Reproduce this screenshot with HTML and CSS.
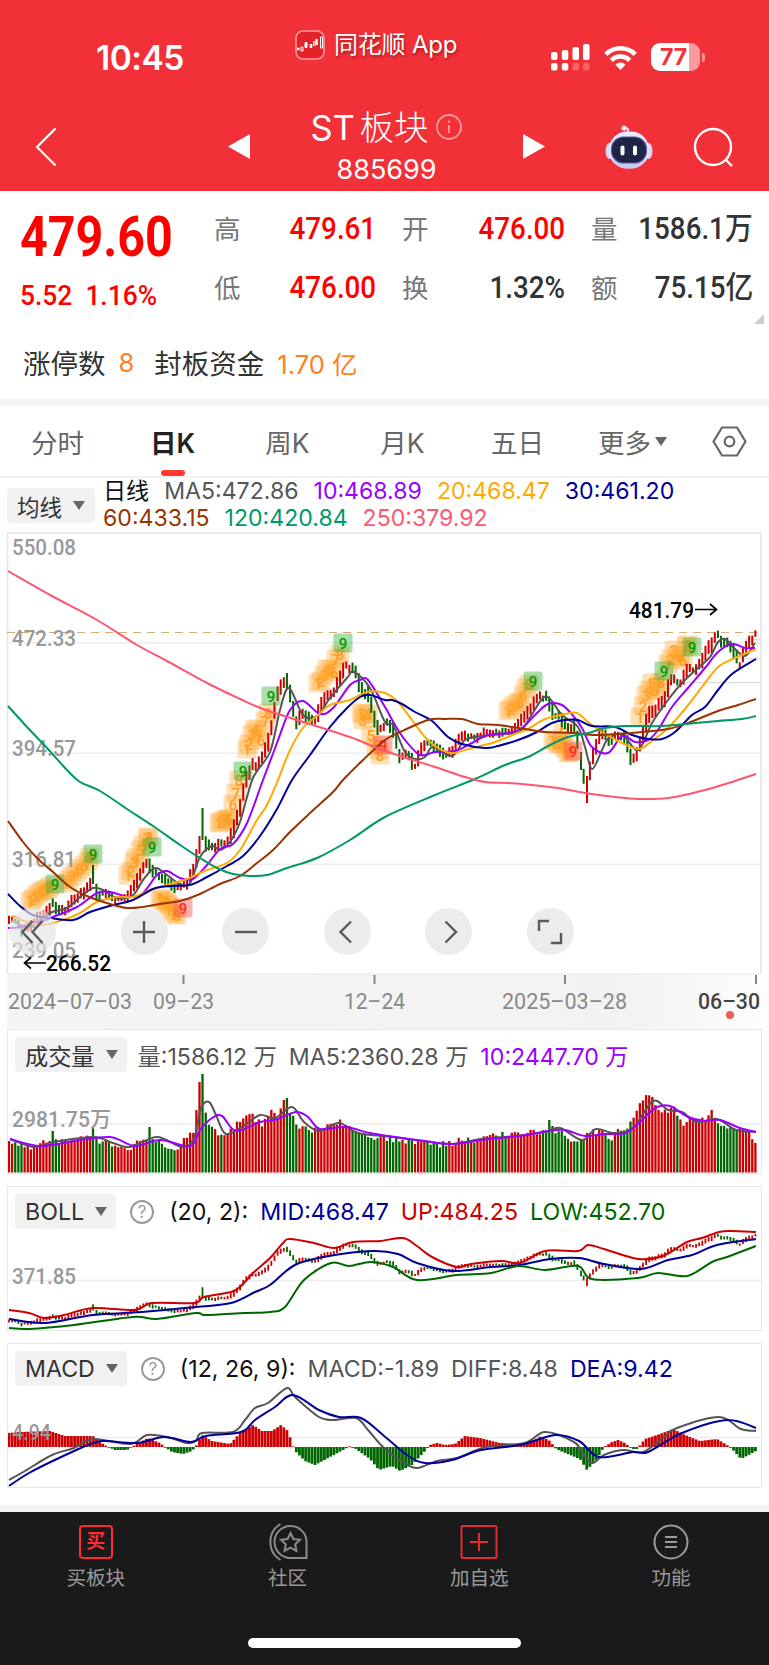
FILE: index.html
```html
<!DOCTYPE html>
<html lang="zh-CN">
<head>
    <meta charset="UTF-8">
    <meta name="viewport" content="width=device-width, initial-scale=1.0">
    <title>ST板块 885699</title>
    <link rel="stylesheet" href="styles.css">
</head>
<body>
    <header class="header">
        <div class="status-bar">
            <div class="status-time">10:45</div>
            <div class="app-name">
                <svg width="30" height="30" viewBox="0 0 30 30">
                    <rect x="1" y="1" width="28" height="28" rx="7" fill="#e32229" stroke="#ff9a9c" stroke-width="1.6"/>
                    <path d="M2 19h2.500M11 12v6M16 14v4M21.500 9v6" stroke="#fff" stroke-width="2.400"/>
                    <path d="M6 17h2v4H6zM10 13.500h2v3h-2zM18.500 11.500h1.600v4h-1.600zM25.500 7h2v11h-2z" fill="none" stroke="#fff" stroke-width="1"/>
                </svg>
                <span>同花顺 App</span>
            </div>
            <div class="status-icons">
                <svg width="39" height="28" viewBox="0 0 39 28" fill="#fff">
                    <rect x="0" y="9" width="6.500" height="8" rx="2"/>
                    <rect x="10.800" y="7" width="6.500" height="10" rx="2"/>
                    <rect x="21.500" y="4" width="6.500" height="13" rx="2"/>
                    <rect x="32" y="1" width="6.500" height="16" rx="2"/>
                    <rect x="0" y="20" width="6.500" height="7.500" rx="2"/>
                    <rect x="10.800" y="20" width="6.500" height="7.500" rx="2"/>
                    <rect x="21.500" y="20" width="6.500" height="7.500" rx="2" opacity=".25"/>
                    <rect x="32" y="20" width="6.500" height="7.500" rx="2" opacity=".25"/>
                </svg>
                <svg class="wifi" width="33" height="26" viewBox="0 0 33 26" fill="none" stroke="#fff" stroke-width="4.600">
                    <path d="M1.800 9.300a21 21 0 0 1 29.400 0M7.300 15.300a13 13 0 0 1 18.400 0"/>
                    <path d="M16.500 25l-5-5.300a7 7 0 0 1 10 0z" fill="#fff" stroke="none"/>
                </svg>
                <div class="battery"><span>77</span></div>
                <i class="battery-cap"></i>
            </div>
        </div>
        <div class="nav-bar">
            <svg class="nav-back" width="22" height="40" viewBox="0 0 22 40"><path d="M20.500 1.500L2 20l18.500 18.500" fill="none" stroke="#fff" stroke-width="2.200"/></svg>
            <svg class="nav-prev" width="22" height="25" viewBox="0 0 22 25"><path d="M22 0v25L0 12.500z" fill="#fff"/></svg>
            <div class="nav-title">
                <div class="nav-name"><span>ST <span>板块</span></span>
                    <svg width="28" height="28" viewBox="0 0 28 28" fill="none" stroke="#ff9c9f" stroke-width="1.800">
                        <circle cx="14" cy="14" r="12"/><path d="M14 12v8M14 7.500v2.300"/>
                    </svg>
                </div>
                <div class="nav-code">885699</div>
            </div>
            <svg class="nav-next" width="22" height="25" viewBox="0 0 22 25"><path d="M0 0v25l22-12.500z" fill="#fff"/></svg>
            <svg class="nav-robot" width="48" height="44" viewBox="0 0 48 44">
                <path d="M23 8V4.500q-2-2.500-4-1.500" fill="none" stroke="#dfe3ff" stroke-width="2.200"/>
                <circle cx="19" cy="3" r="2.600" fill="#f4e4f2"/>
                <ellipse cx="4.500" cy="26" rx="4" ry="8" fill="#d3d6f8"/>
                <ellipse cx="43.500" cy="26" rx="4" ry="8" fill="#d3d6f8"/>
                <rect x="4" y="6.500" width="40" height="37" rx="18" fill="#e8eafd"/>
                <path d="M7 34q17 9 34 0-5 9.500-17 9.500T7 34z" fill="#c6caf0"/>
                <rect x="6.500" y="12" width="35" height="26" rx="12" fill="#1d2446" stroke="#5b55a8" stroke-width="1.200"/>
                <rect x="15.500" y="20.500" width="4" height="10" rx="2" fill="#fff"/>
                <rect x="28" y="20.500" width="4" height="10" rx="2" fill="#fff"/>
            </svg>
            <svg class="nav-search" width="42" height="42" viewBox="0 0 42 42" fill="none" stroke="#fff" stroke-width="2.400">
                <circle cx="20" cy="20" r="18"/><path d="M32 32l7 7"/>
            </svg>
        </div>
    </header>

    <section class="quote">
        <div class="quote-grid">
            <div class="quote-price"><span class="din">479.60</span></div>
            <div class="quote-item"><label>高</label><b class="din up">479.61</b></div>
            <div class="quote-item"><label>开</label><b class="din up">476.00</b></div>
            <div class="quote-item"><label>量</label><b class="din">1586.1万</b></div>
            <div class="quote-change"><span class="din">5.52&nbsp; 1.16%</span></div>
            <div class="quote-item"><label>低</label><b class="din up">476.00</b></div>
            <div class="quote-item"><label>换</label><b class="din">1.32%</b></div>
            <div class="quote-item"><label>额</label><b class="din">75.15亿</b></div>
        </div>
        <i class="quote-corner"></i>
        <div class="quote-extra">
            <span>涨停数</span><em>8</em><span class="second">封板资金</span><em>1.70 亿</em>
        </div>
    </section>

    <nav class="tabs">
        <div class="tab">分时</div>
        <div class="tab active">日K</div>
        <div class="tab">周K</div>
        <div class="tab">月K</div>
        <div class="tab">五日</div>
        <div class="tab">更多<i class="caret"></i></div>
        <div class="tab">
            <svg width="35" height="31" viewBox="0 0 35 31" fill="none" stroke="#666" stroke-width="2.200">
                <path d="M10 1.500h15l8.500 14-8.500 14H10L1.500 15.500z" stroke-linejoin="round"/><circle cx="17.500" cy="15.500" r="4.800"/>
            </svg>
        </div>
    </nav>

    <section class="ma-legend">
        <div class="chip chip-ma">均线<i class="caret"></i></div>
        <div class="ma-values">
            <div><span class="c-black">日线</span><span class="c-gray">MA5:472.86</span><span class="c-purple">10:468.89</span><span class="c-yellow">20:468.47</span><span class="c-blue">30:461.20</span></div>
            <div><span class="c-brown">60:433.15</span><span class="c-teal">120:420.84</span><span class="c-pink">250:379.92</span></div>
        </div>
    </section>

    <section class="kline">
        <svg id="kline" width="769" height="443" viewBox="0 532 769 443"></svg>
        <div class="tools">
            <button class="tool faded"><svg viewBox="0 0 24 24"><path d="M11.500 1L1.500 12l10 11M21.500 1l-10 11 10 11"/></svg></button>
            <button class="tool"><svg viewBox="0 0 24 24"><path d="M12 1v22M1 12h22"/></svg></button>
            <button class="tool"><svg viewBox="0 0 24 24"><path d="M1 12h22"/></svg></button>
            <button class="tool"><svg viewBox="0 0 24 24"><path d="M16 1.500L5.500 12 16 22.500"/></svg></button>
            <button class="tool"><svg viewBox="0 0 24 24"><path d="M8.500 1.500L19 12 8.500 22.500"/></svg></button>
            <button class="tool"><svg viewBox="0 0 24 24"><path d="M1 11V1h10M23 13v10H13"/></svg></button>
        </div>
        <svg id="dates" class="dates" width="769" height="54" viewBox="0 975 769 54"></svg>
    </section>

    <section class="panel panel-vol">
        <div class="panel-head">
            <div class="chip">成交量<i class="caret"></i></div>
            <span class="c-gray first">量:1586.12 万</span><span class="c-gray">MA5:2360.28 万</span><span class="c-purple">10:2447.70 万</span>
        </div>
        <svg id="volume" width="753" height="102" viewBox="8 1072 753 102"></svg>
    </section>

    <section class="panel panel-boll">
        <div class="panel-head">
            <div class="chip">BOLL<i class="caret"></i></div>
            <i class="help">?</i>
            <span class="c-black">(20, 2):</span><span class="c-blue">MID:468.47</span><span class="c-red">UP:484.25</span><span class="c-green">LOW:452.70</span>
        </div>
        <svg id="boll" width="753" height="102" viewBox="8 1229 753 102"></svg>
    </section>

    <section class="panel panel-macd">
        <div class="panel-head">
            <div class="chip">MACD<i class="caret"></i></div>
            <i class="help">?</i>
            <span class="c-black">(12, 26, 9):</span><span class="c-gray">MACD:-1.89</span><span class="c-gray">DIFF:8.48</span><span class="c-blue">DEA:9.42</span>
        </div>
        <svg id="macd" width="753" height="101" viewBox="8 1386 753 101"></svg>
    </section>

    <footer class="bottom">
        <div class="bottom-items">
            <div class="bottom-item">
                <span class="buy-icon">买</span>
                <span>买板块</span>
            </div>
            <div class="bottom-item">
                <svg width="42" height="38" viewBox="0 0 42 38" fill="none" stroke="#8b8b8b" stroke-width="2">
                    <path d="M13.500 1a21 21 0 0 0 0 36"/>
                    <path d="M39.500 35H24A16 16 0 1 1 39.500 19z"/>
                    <path d="M23.500 10l2.900 6 6.600.8-4.800 4.600 1.200 6.500-5.900-3.200-5.900 3.200 1.200-6.500-4.800-4.600 6.600-.8z"/>
                </svg>
                <span>社区</span>
            </div>
            <div class="bottom-item">
                <svg width="38" height="38" viewBox="0 0 38 38" fill="none" stroke="#e52b30" stroke-width="2">
                    <rect x="1.500" y="3" width="35" height="32" rx="1"/><path d="M19 10v18M10 19h18"/>
                </svg>
                <span>加自选</span>
            </div>
            <div class="bottom-item">
                <svg width="38" height="38" viewBox="0 0 38 38" fill="none" stroke="#9a9a9a" stroke-width="2">
                    <circle cx="19" cy="19" r="16.500"/><path d="M13 14h12M13 19h12M13 24h12"/>
                </svg>
                <span>功能</span>
            </div>
        </div>
        <div class="home-bar"></div>
    </footer>
    <script src="chart.js"></script>
</body>
</html>
```
FILE: styles.css
```css
* {
    box-sizing: border-box;
}
body {
    margin: 0;
    width: 769px;
    background: #fff;
    color: #333;
    font-family: Inter, "Noto Sans CJK SC", sans-serif;
}
svg {
    display: block;
    flex: none;
}
.din {
    display: inline-block;
    font-family: Roboto, "Noto Sans CJK SC", sans-serif;
    font-weight: 500;
    transform: scaleX(0.91);
    transform-origin: right center;
    white-space: nowrap;
}

/* Header */
.header {
    height: 191px;
    background: #f23037;
    color: #fff;
}
.status-bar {
    display: flex;
    height: 104px;
    padding-top: 28px;
}
.status-time {
    width: 295px;
    padding: 9px 0 0 96px;
    font-size: 33.5px;
    line-height: 42px;
    font-weight: 600;
    letter-spacing: -0.5px;
}
.app-name {
    display: flex;
    align-items: center;
    gap: 9px;
    width: 256px;
    height: 33px;
    font-size: 24px;
    letter-spacing: -0.2px;
    text-shadow: 1px 2px 3px rgba(90,0,0,0.5);
}
.app-name span {
    margin-top: -4px;
}
.status-icons {
    display: flex;
    padding-top: 15px;
}
.wifi {
    margin: 2px 14px 0 14px;
}
.battery {
    width: 49px;
    height: 28px;
    border-radius: 9px;
    background: linear-gradient(90deg, #fff 78%, #f99b9e 78%);
    color: #f23037;
    font-size: 23px;
    line-height: 28px;
    font-weight: 700;
    padding-left: 9px;
}
.battery-cap {
    width: 3px;
    height: 9px;
    margin: 10px 0 0 2px;
    border-radius: 0 4px 4px 0;
    background: #f99b9e;
}
.nav-bar {
    display: flex;
    align-items: flex-start;
    height: 87px;
}
.nav-back {
    margin: 23px 0 0 35px;
}
.nav-prev {
    margin: 30px 0 0 171px;
}
.nav-title {
    width: 273px;
    text-align: center;
}
.nav-name {
    display: flex;
    justify-content: center;
    align-items: center;
    gap: 6px;
    height: 46px;
    font-size: 34.5px;
    word-spacing: -5px;
}
.nav-name > span {
    margin-top: -5px;
}
.nav-name span span {
    font-weight: 300;
}
.nav-code {
    font-size: 27px;
    line-height: 40px;
}
.nav-next {
    margin-top: 30px;
}
.nav-robot {
    margin: 21px 0 0 60px;
}
.nav-search {
    margin: 23px 0 0 40px;
}

/* Quote */
.quote {
    position: relative;
    height: 215px;
    border-bottom: 7px solid #f4f4f4;
}
.quote-grid {
    display: grid;
    grid-template-columns: 168px 162px 163px 162px;
    column-gap: 26px;
    grid-template-rows: 60px 58px;
    padding: 9px 0 0 20px;
    align-items: center;
}
.quote-price {
    padding-top: 13px;
    color: #f00;
    font-size: 55px;
    line-height: 62px;
}
.quote-price .din {
    font-weight: 700;
    transform: scaleX(0.88);
    transform-origin: left center;
}
.quote-change {
    padding-top: 10px;
    color: #f00;
    font-size: 28.5px;
}
.quote-change .din {
    transform: scaleX(0.925);
    transform-origin: left center;
}
.quote-item {
    display: flex;
    justify-content: space-between;
    align-items: center;
    padding-bottom: 2px;
    font-size: 30.5px;
    line-height: 40px;
}
.quote-item label {
    font-size: 26.5px;
    color: #777;
}
.up {
    color: #f00;
}
.quote-corner {
    position: absolute;
    right: 5px;
    top: 123px;
    border-left: 10px solid transparent;
    border-bottom: 10px solid #ccc;
}
.quote-extra {
    display: flex;
    align-items: center;
    height: 40px;
    margin-top: 24px;
    padding-left: 23px;
    font-size: 27.5px;
}
.quote-extra em {
    margin: 1px 0 0 13px;
    font-style: normal;
    font-size: 25.5px;
    color: #ff801a;
}
.quote-extra .second {
    margin-left: 20px;
}

/* Tabs */
.caret {
    display: inline-block;
    border: 6px solid transparent;
    border-top: 9px solid #666;
    border-bottom: 0;
}
.tabs {
    display: grid;
    grid-template-columns: repeat(6, 115px) 1fr;
    height: 72px;
    border-bottom: 2px solid #f1f1f1;
}
.tab {
    position: relative;
    display: flex;
    justify-content: center;
    align-items: center;
    font-size: 26.5px;
    color: #666;
}
.tab .caret {
    margin-left: 4px;
}
.tab:last-child {
    padding-right: 1px;
}
.tab.active {
    color: #222;
    font-weight: 600;
}
.tab.active::after {
    content: "";
    position: absolute;
    bottom: 0;
    width: 24px;
    height: 6px;
    border-radius: 3px;
    background: #ff3b30;
}

/* Legends */
.chip {
    display: flex;
    align-items: center;
    gap: 11px;
    height: 35px;
    padding: 0 9px 0 10px;
    border-radius: 4px;
    background: #f1f1f1;
    color: #333;
    font-size: 23.2px;
}
.ma-legend {
    display: flex;
    height: 54px;
    padding-left: 7px;
    font-size: 23.1px;
}
.chip-ma {
    width: 88px;
    margin-top: 10px;
    font-size: 22.5px;
}
.ma-values {
    margin-left: 8px;
    line-height: 27px;
    white-space: nowrap;
}
.ma-values span {
    margin-right: 15px;
}
.c-black { color: #111; }
.c-gray { color: #555; }
.c-purple { color: #9900ff; }
.c-yellow { color: #ffaa00; }
.c-blue { color: #000099; }
.c-brown { color: #993300; }
.c-teal { color: #009966; }
.c-pink { color: #ff5672; }
.c-red { color: #cc0000; }
.c-green { color: #006600; }

/* K line */
.kline {
    position: relative;
    height: 497px;
}
.dates {
    background: linear-gradient(90deg, #fff 7px, #f5f5f5 7px, #f2f2f2 80%, #fdfdfd);
}
.tools {
    position: absolute;
    left: 9px;
    top: 376px;
    display: flex;
    gap: 54.5px;
}
.tool {
    display: flex;
    justify-content: center;
    align-items: center;
    width: 47px;
    height: 47px;
    padding: 0;
    border: 0;
    border-radius: 50%;
    background: #ececec;
}
.tool svg {
    width: 24px;
    height: 24px;
    fill: none;
    stroke: #5a5a5a;
    stroke-width: 2.4;
    overflow: visible;
}
.tool.faded {
    margin-right: 10px;
    background: rgba(228,228,228,0.68);
}
text {
    font-family: Roboto, "Noto Sans CJK SC", sans-serif;
    font-size: 22px;
}
.axis-label {
    fill: #999;
    font-weight: 500;
}
.date-label {
    fill: #888;
}
.mark-label {
    fill: #000;
    font-weight: 500;
}
.nine {
    font-size: 15px;
    font-weight: 500;
    text-anchor: middle;
}

/* Indicator panels */
.panel {
    width: 755px;
    height: 145px;
    margin: 0 0 12px 7px;
    border: 1.5px solid #e8e8e8;
}
.panel-head {
    display: flex;
    align-items: center;
    gap: 12px;
    height: 42px;
    padding: 7px 0 0 7px;
    font-size: 23.2px;
    white-space: nowrap;
}
.panel-head .first {
    margin-left: -1px;
}
.help {
    display: inline-flex;
    justify-content: center;
    align-items: center;
    width: 24px;
    height: 24px;
    margin: 0 3px 0 2px;
    border: 2px solid #999;
    border-radius: 50%;
    font-style: normal;
    font-size: 17px;
    color: #999;
}

/* Bottom bar */
.bottom {
    height: 160px;
    margin-top: 17px;
    border-top: 7px solid #f4f4f4;
    background: #1a1a1a;
}
.panel-macd {
    margin-bottom: 0;
}
.bottom-items {
    display: grid;
    grid-template-columns: repeat(4, 1fr);
    height: 126px;
    padding-top: 11px;
    margin-right: 2px;
}
.bottom-item {
    display: flex;
    flex-direction: column;
    align-items: center;
    font-size: 19.5px;
    line-height: 34px;
    color: #999;
}
.buy-icon {
    width: 34px;
    height: 34px;
    margin: 2px 0;
    border: 2px solid #ff2b33;
    border-radius: 4px;
    color: #ff2b33;
    font-size: 19px;
    line-height: 29px;
    font-weight: 700;
    text-align: center;
}
.home-bar {
    width: 273px;
    height: 10px;
    margin: 0 auto;
    border-radius: 5px;
    background: #fff;
}
```
FILE: chart.js
```javascript
const RED = '#cc0000';
const GREEN = '#006600';
const COUNT = 240;
const FIRST_X = 9;
const STEP = 3.123;

// Moving averages: color and curve points
const ma = {
    ma5: ['#555555', '13,920 23,926 33,926 50,913 67,908 80,897 93,888 103,890 117,898 133,895 143,880 155,868 167,875 180,884 190,883 200,857 212,846 220,850 230,842 240,822 253,778 270,752 280,710 289,688 303,715 317,716 330,698 347,678 354,672 370,688 385,722 393,725 405,752 415,759 425,757 433,747 452,756 465,740 482,736 512,733 523,728 542,699 550,699 562,715 578,727 585,747 592,769 602,750 608,739 622,734 638,750 652,723 668,700 682,683 698,668 710,657 718,642 725,639 733,647 745,656 755,643'],
    ma10: ['#9900ff', '8,928 23,927 37,923 53,917 77,907 97,893 110,892 130,897 143,893 157,875 167,871 180,878 193,879 207,865 220,849 233,844 247,823 263,780 277,743 290,710 303,701 320,714 333,708 350,685 360,680 368,680 385,707 395,725 405,740 418,754 425,755 435,752 455,751 472,743 488,735 508,733 522,728 535,715 548,704 562,705 575,718 582,728 592,747 608,753 622,736 635,742 648,740 658,730 672,707 688,688 705,668 718,652 732,644 745,648 755,648'],
    ma20: ['#ffaa00', '12,916 27,922 43,925 63,920 80,913 97,902 117,897 133,897 150,890 167,885 187,879 207,870 227,863 240,850 257,820 267,805 278,780 290,750 303,728 317,716 330,705 350,700 367,692 385,693 398,702 412,720 425,737 438,748 452,753 472,748 495,742 515,734 528,729 545,719 565,714 577,713 588,722 602,732 618,741 638,749 652,741 668,728 685,709 702,687 718,667 735,658 756,649'],
    ma30: ['#000099', '8,894 20,906 33,915 50,918 73,920 90,912 113,905 133,900 153,889 170,886 190,885 207,877 227,866 243,856 260,836 277,809 292,780 310,755 330,727 347,708 360,697 370,695 385,700 392,700 402,704 415,712 432,721 448,737 462,744 485,748 498,746 518,740 535,733 552,723 565,720 578,720 592,726 615,727 632,735 648,739 662,739 675,732 692,715 705,707 718,690 732,674 756,659'],
    ma60: ['#993300', '8,821 23,842 37,858 53,872 70,887 87,896 110,904 127,908 143,907 160,904 180,901 200,894 220,884 240,876 257,863 273,850 290,832 310,813 333,792 343,780 363,760 385,740 398,733 428,720 445,719 462,719 478,724 498,725 525,729 545,732 572,733 595,735 618,734 642,732 668,729 688,723 718,711 738,705 756,699'],
    ma120: ['#009966', '8,706 27,727 47,748 67,770 80,782 100,791 127,809 153,826 180,845 200,858 217,868 233,874 250,876 267,875 287,868 317,858 350,840 385,817 435,795 475,779 505,765 528,757 548,746 568,737 588,733 605,728 625,726 662,726 695,723 718,721 742,719 756,716'],
    ma250: ['#ff5672', '8,571 52,596 97,620 137,645 167,661 207,683 240,699 263,709 300,721 350,737 385,751 435,767 465,777 485,782 508,783 532,785 558,788 585,793 615,797 638,799 668,798 705,790 735,781 756,774']
};

const priceMid = '9,919 15,919 22,930 30,925 38,918 50,908 53,900 57,910 65,911 72,902 80,895 88,888 93,878 97,893 110,895 117,900 127,897 135,885 141,873 147,863 152,872 160,875 167,880 174,888 180,887 187,883 193,871 199,850 202,830 206,845 212,848 220,845 227,843 233,832 240,808 246,780 252,765 257,765 263,758 270,735 277,695 283,682 287,680 291,697 296,722 303,712 310,718 315,722 320,710 327,695 333,692 340,680 345,665 350,668 355,670 362,690 368,695 371,705 377,727 383,727 388,722 395,735 400,760 405,755 411,757 415,768 420,752 425,743 432,745 440,752 445,757 452,752 457,742 465,735 475,738 485,733 500,733 512,731 520,722 528,711 535,701 540,697 548,698 553,715 560,715 567,728 575,725 580,755 584,779 587,788 591,765 597,742 602,733 610,740 620,735 627,742 631,757 635,757 640,745 645,727 650,714 657,708 665,697 672,678 680,683 688,670 697,668 705,655 712,643 717,634 722,643 727,640 734,652 740,665 745,648 755,635';

const volumeTop = '8,1139 22,1147 35,1146 50,1141 65,1143 80,1138 90,1137 100,1141 115,1145 130,1149 137,1139 147,1138 160,1143 165,1150 180,1146 190,1134 195,1128 199,1082 202,1074 205,1112 212,1130 222,1134 232,1130 240,1122 252,1114 262,1126 270,1110 278,1120 284,1098 290,1115 300,1128 310,1130 325,1127 340,1122 360,1134 380,1138 400,1140 420,1141 440,1145 460,1141 480,1139 500,1135 520,1133 540,1132 550,1128 565,1135 580,1143 590,1130 600,1132 612,1139 620,1130 630,1126 637,1110 643,1097 648,1096 655,1108 665,1113 674,1107 682,1126 690,1120 705,1120 712,1117 720,1123 735,1130 745,1131 750,1130 755,1146';
const volumeSpikes = {52: 1131, 92: 1128, 149: 1127, 199: 1082, 202: 1074, 283: 1100, 287: 1098, 549: 1120, 646: 1095, 652: 1097, 712: 1110};

const macdBars = '8,14 20,15 50,16 65,11 93,11 103,3 108,0 115,-3 127,-3 135,2 148,9 160,4 165,0 172,-5 183,-7 192,-4 196,1 202,12 212,6 230,3 240,14 253,22 262,16 272,16 281,22 288,16 293,1 296,-5 305,-14 315,-18 330,-10 345,-2 350,1 356,-2 370,-12 379,-23 392,-19 400,-24 412,-18 425,-4 430,2 437,4 445,2 455,3 465,11 480,9 500,4 520,3 535,7 541,11 550,6 556,-2 575,-10 580,-12 587,-23 597,-12 604,0 612,5 618,7 625,4 632,-2 637,-2 645,8 660,13 673,18 685,12 700,6 717,8 727,2 733,-3 741,-12 756,-4';

// x, y of counts 1-8, then the closing 9
const nines = [
    ['30,901 33,899 36,896 39,893 42,891 45,890 48,889 50,886', '55,884', 'g'],
    ['66,883 69,880 72,876 76,872 80,869 84,865 88,861 90,857', '93,854', 'g'],
    ['128,875 131,871 134,862 136,858 140,850 143,845 147,838 149,837', '152,847', 'g'],
    ['160,898 162,900 165,901 167,903 169,905 171,910 174,914 177,915', '183,908', 'r'],
    ['219,823 221,822 224,820 227,819 229,819 233,804 236,793 239,780', '243,771', 'g'],
    ['247,749 249,744 252,734 255,729 258,730 261,740 265,721 268,713', '271,696', 'g'],
    ['318,683 321,681 324,675 327,669 331,669 334,672 336,659 340,654', '343,643', 'g'],
    ['361,713 364,714 363,720 368,714 371,735 376,745 379,750 380,755', '383,745', 'r'],
    ['508,711 511,709 514,706 517,703 520,702 523,695 526,688 529,684', '533,681', 'g'],
    ['553,740 556,742 559,744 562,744 563,733 565,748 568,753 570,752', '573,751', 'r'],
    ['640,717 643,706 646,695 649,690 652,683 655,690 658,687 661,682', '664,671', 'g'],
    ['668,664 671,659 674,650 677,655 680,656 683,660 686,646 688,645', '692,647', 'g']
];

function parse(str) {
    return str.split(' ').map(p => p.split(',').map(Number));
}
function valueAt(pts, x) {
    if (x <= pts[0][0]) return pts[0][1];
    for (let i = 1; i < pts.length; i++) {
        if (x <= pts[i][0]) {
            const t = (x - pts[i - 1][0]) / (pts[i][0] - pts[i - 1][0]);
            return pts[i - 1][1] + t * (pts[i][1] - pts[i - 1][1]);
        }
    }
    return pts[pts.length - 1][1];
}
function noise(i) {
    const v = Math.sin(i * 127.1 + 11.7) * 43758.5453;
    return v - Math.floor(v);
}
function curve(str, color) {
    const p = parse(str);
    let d = `M${p[0]}`;
    for (let i = 0; i < p.length - 1; i++) {
        const a = p[i - 1] || p[i], b = p[i], c = p[i + 1], e = p[i + 2] || c;
        d += `C${b[0] + (c[0] - a[0]) / 6} ${b[1] + (c[1] - a[1]) / 6} ${c[0] - (e[0] - b[0]) / 6} ${c[1] - (e[1] - b[1]) / 6} ${c}`;
    }
    return `<path d="${d}" fill="none" stroke="${color}" stroke-width="2"/>`;
}
function bar(x, y1, y2, color, w) {
    return `<rect x="${x - w / 2}" y="${Math.min(y1, y2)}" width="${w}" height="${Math.max(Math.abs(y2 - y1), 0.8)}" fill="${color}"/>`;
}
function hline(y, x1, color) {
    return `<path d="M${x1} ${y}H761" stroke="${color || '#ededed'}" stroke-width="1.6"/>`;
}
function label(x, y, width, text, cls) {
    return `<text class="${cls || 'axis-label'}" x="${x}" y="${y}" textLength="${width}" lengthAdjust="spacingAndGlyphs">${text}</text>`;
}

const mid = parse(priceMid);
const candles = [];
for (let i = 0; i < COUNT; i++) {
    const x = FIRST_X + i * STEP;
    const slope = valueAt(mid, x + 3) - valueAt(mid, x - 3);
    const y = valueAt(mid, x) + (noise(i) - 0.5) * 4;
    let h = 4 + noise(i + 300) * 5 + Math.min(Math.abs(slope) * 0.7, 10);
    const color = slope + (noise(i + 700) - 0.45) * 7 > 1 ? GREEN : RED;
    candles.push({x, top: y - h / 2, bottom: y + h / 2, color});
}
function setCandle(x, top, bottom, color) {
    candles[Math.round((x - FIRST_X) / STEP)] = {x, top, bottom, color};
}
setCandle(202.5, 808, 840, GREEN);
setCandle(93, 865, 884, GREEN);
setCandle(581, 752, 770, GREEN);
setCandle(587, 776, 803, RED);

function badge(x, y, n, type) {
    const fill = {o: 'rgba(255,165,50,.35)', g: 'rgba(50,175,50,.42)', r: 'rgba(255,70,70,.42)'}[type];
    const ink = {o: '#ff9d20', g: '#009900', r: '#ff2a2a'}[type];
    return `<rect x="${x - 9.500}" y="${y - 9.500}" width="19" height="19" rx="2" fill="${fill}"/><text class="nine" x="${x}" y="${y + 5.500}" fill="${ink}">${n}</text>`;
}

// Main chart
let out = '<path d="M7.500 974V533H761V974" fill="none" stroke="#e6e6e6" stroke-width="1.600"/>';
out += hline(642.7, 8) + hline(753.3, 8) + hline(864.3, 8) + hline(974, 8);
out += hline(639.5, 745, '#ddd') + hline(658.5, 735, '#ddd') + hline(682.5, 685, '#ddd');
out += '<path d="M7 632.500H761" stroke="#d9ab70" stroke-width="1.200" stroke-dasharray="8 6"/>';
nines.forEach(([steps, last, type]) => {
    parse(steps).forEach(([x, y], i) => { out += badge(x, y, i + 1, 'o'); });
});
candles.forEach(c => { out += bar(c.x, c.top, c.bottom, c.color, 2); });
nines.forEach(([steps, last, type]) => {
    const [x, y] = parse(last)[0];
    out += badge(x, y, 9, type);
});
out += label(12, 554.5, 64, '550.08') + label(12, 645.5, 64, '472.33') + label(12, 756, 64, '394.57') + label(12, 866.5, 64, '316.81') + label(12, 958, 64, '239.05');
Object.values(ma).forEach(([color, pts]) => { out += curve(pts, color); });
out += label(629, 617.5, 65, '481.79', 'mark-label') + label(46, 970.5, 65, '266.52', 'mark-label');
out += '<path d="M695 609.500h21M710 604l6.500 5.500-6.500 5.500M46 963H24.500M31 957.500l-6.500 5.500 6.500 5.500" fill="none" stroke="#000" stroke-width="1.700"/>';
document.getElementById('kline').innerHTML = out;

// Date axis
out = '<path d="M183.500 975v9M374.500 975v9M565 975v9M756 975v9" stroke="#888" stroke-width="2"/>';
[[8, 124, '2024–07–03'], [153, 61, '09–23'], [344, 61, '12–24'], [502, 125, '2025–03–28']].forEach(([x, w, t]) => {
    out += label(x, 1008.5, w, t, 'date-label');
});
out += '<text x="698" y="1008.500" textLength="62" lengthAdjust="spacingAndGlyphs" fill="#444" font-weight="500">06–30</text>';
out += '<circle cx="730" cy="1015" r="4" fill="#f25b5b"/>';
document.getElementById('dates').innerHTML = out;

// Volume
const vol = parse(volumeTop);
out = hline(1123.7, 8);
for (let i = 0; i < COUNT; i++) {
    const c = candles[i];
    let y = valueAt(vol, c.x) + (noise(i + 50) - 0.5) * 7;
    Object.keys(volumeSpikes).forEach(k => {
        if (Math.abs(k - c.x) < STEP / 2) y = volumeSpikes[k];
    });
    out += bar(c.x, y, 1172.5, c.color, 2.3);
}
out += label(12, 1127, 99, '2981.75万');
out += curve('10,1139 34,1147 54,1142 93,1137 113,1143 130,1147 157,1137 182,1147 194,1138 201,1108 209,1102 216,1115 226,1134 245,1125 260,1115 275,1118 292,1107 304,1122 319,1131 339,1123 358,1133 393,1137 422,1141 452,1144 481,1139 515,1136 545,1132 560,1128 582,1140 596,1129 614,1133 633,1128 653,1101 668,1110 682,1112 697,1122 717,1119 736,1130 756,1132', '#555555');
out += curve('10,1139 40,1146 75,1141 110,1137 135,1146 160,1140 190,1146 200,1130 212,1118 222,1116 236,1131 260,1122 275,1120 296,1112 308,1117 320,1129 345,1127 370,1133 395,1137 425,1141 452,1144 490,1139 520,1136 548,1131 565,1130 585,1136 605,1134 625,1133 640,1122 655,1108 670,1106 688,1117 705,1121 720,1120 740,1128 756,1132', '#9900ff');
document.getElementById('volume').innerHTML = out;

// BOLL
out = hline(1280.5, 8);
const bollY = y => 1280.5 + 0.3 * (y - 785.6);
candles.forEach(c => { out += bar(c.x, bollY(c.top), bollY(c.bottom) + 0.5, c.color, 1.8); });
out += label(12, 1283.5, 64, '371.85');
out += curve('9,1310 29,1313 44,1318 64,1315 93,1308 135,1310 152,1303 194,1303 204,1297 231,1292 241,1286 253,1273 270,1258 283,1243 290,1239 314,1243 334,1248 353,1242 380,1241 403,1238 417,1246 432,1257 457,1267 471,1264 501,1261 520,1263 545,1251 578,1251 588,1245 604,1249 638,1259 663,1256 687,1242 702,1238 719,1232 731,1231 756,1232', RED);
out += curve('9,1319 44,1323 93,1315 142,1312 196,1307 231,1303 255,1292 270,1285 295,1265 329,1256 373,1251 398,1254 417,1263 452,1271 491,1267 520,1265 550,1259 579,1258 604,1264 641,1269 668,1260 692,1255 717,1245 756,1239', '#000099');
out += curve('9,1328 29,1329 74,1325 133,1317 157,1319 196,1313 206,1315 245,1313 270,1312 285,1307 304,1280 331,1263 349,1266 371,1262 393,1267 417,1280 457,1275 491,1273 518,1266 545,1270 578,1266 592,1279 638,1278 658,1273 687,1276 712,1262 727,1257 756,1246', GREEN);
document.getElementById('boll').innerHTML = out;

// MACD
const bars = parse(macdBars);
out = hline(1437.5, 8);
for (let i = 0; i < COUNT; i++) {
    const x = FIRST_X + i * STEP;
    const h = valueAt(bars, x);
    out += bar(x, 1447, 1447 - h, h >= 0 ? RED : GREEN, 2.8);
}
out += label(12, 1439.5, 39, '4.94');
out += curve('9,1480 25,1471 52,1455 74,1448 93,1439 130,1444 147,1435 167,1437 187,1443 196,1441 202,1433 233,1432 245,1420 255,1408 268,1403 287,1388 295,1397 319,1417 334,1420 356,1418 368,1430 383,1447 403,1462 417,1468 437,1461 457,1458 486,1447 525,1443 545,1432 574,1442 582,1452 592,1463 604,1455 623,1450 643,1452 663,1438 677,1428 719,1417 741,1429 756,1431', '#555555');
out += curve('9,1486 29,1473 59,1458 93,1443 106,1441 137,1443 164,1437 191,1442 206,1436 241,1432 255,1420 275,1407 293,1395 319,1410 339,1417 361,1418 383,1435 407,1455 425,1463 452,1460 481,1450 520,1445 555,1435 579,1441 599,1457 633,1452 648,1452 682,1433 727,1420 756,1428', '#000099');
document.getElementById('macd').innerHTML = out;
```
